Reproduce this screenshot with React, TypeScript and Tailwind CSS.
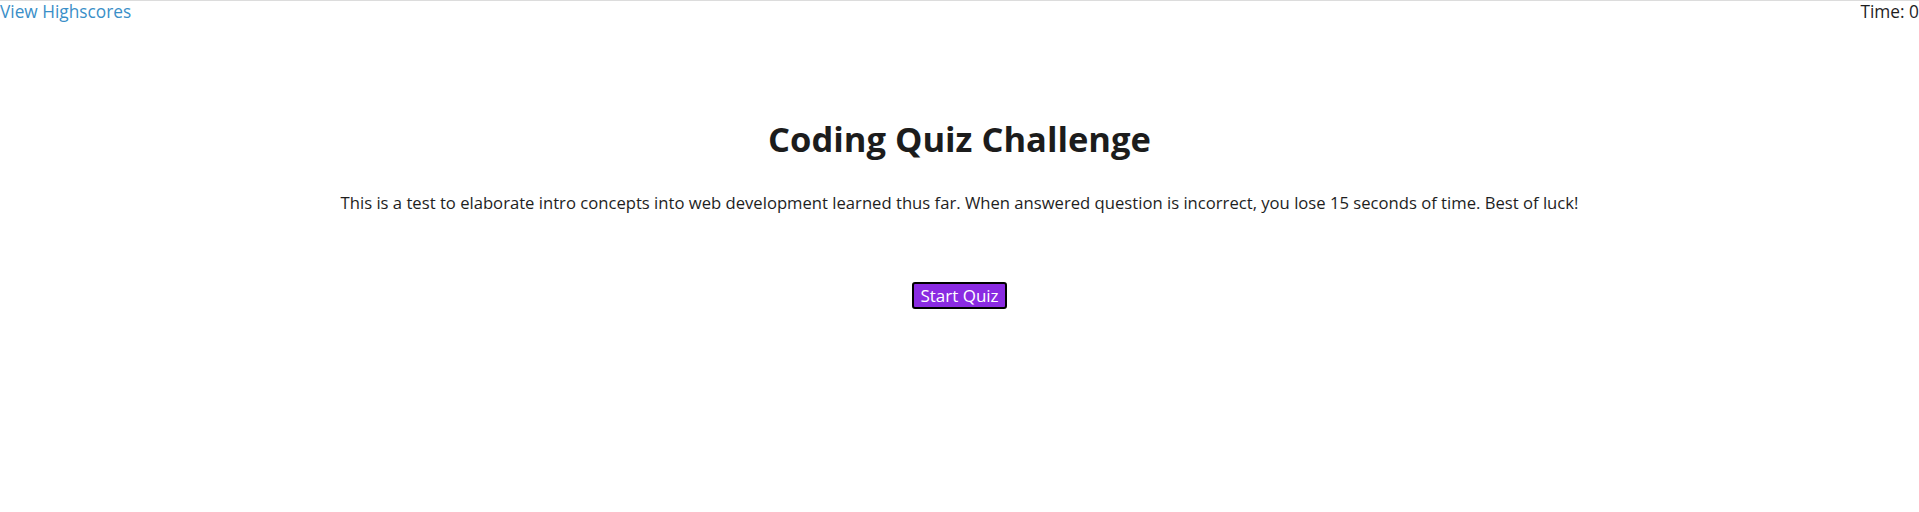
import React from "react";

export default function App() {
  const [time] = React.useState(0);

  return (
    <div className="min-h-[512px] w-full bg-white border-t border-[#dcdcdc] font-['Open_Sans',sans-serif] text-[#1e1e1e]">
      <header className="flex justify-between items-start text-[17.3px] leading-[22px]">
        <a href="#" className="text-[#3a8fc8]">View Highscores</a>
        <span>Time: {time}</span>
      </header>
      <main className="flex flex-col items-center pt-[96px]">
        <h1 className="text-[34.5px] font-bold leading-[40px] text-[#1c1c1c]">Coding Quiz Challenge</h1>
        <p className="mt-[32px] text-[16.65px] leading-[24px]">
          This is a test to elaborate intro concepts into web development learned thus far. When answered question is incorrect, you lose 15 seconds of time. Best of luck!
        </p>
        <button className="mt-[67px] bg-[#8a2be2] text-white text-[17px] leading-[21px] px-[6px] py-[1px] border-2 border-black rounded-[3px]">
          Start Quiz
        </button>
      </main>
    </div>
  );
}
